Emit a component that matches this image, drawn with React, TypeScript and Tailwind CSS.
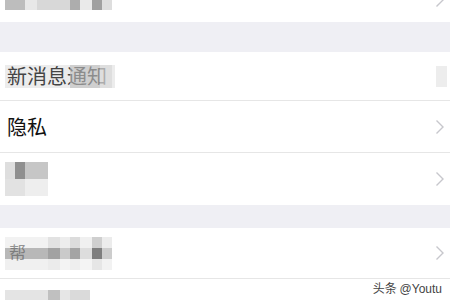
const font = "font-['Noto_Sans_CJK_SC','Noto_Sans',sans-serif]";

function Chevron() {
  return (
    <svg width="10" height="16" viewBox="0 0 10 16" className="shrink-0">
      <polyline points="1.5,1.5 8,8 1.5,14.5" fill="none" stroke="#c7c7cc" strokeWidth="1.4" />
    </svg>
  );
}

// one line of mosaic cells, class strings written out in full
function MosaicRow({ cells, h }: { cells: string[]; h: string }) {
  return (
    <div className={`flex ${h}`}>
      {cells.map((c, i) => (
        <div key={i} className={c} />
      ))}
    </div>
  );
}

export default function App() {
  return (
    <div className={`relative h-[300px] w-[450px] overflow-hidden bg-white ${font}`}>
      {/* top row, cut off */}
      <div className="flex h-[22px] items-start justify-between pl-[5px] pr-[5px]">
        <MosaicRow
          h="h-[10px]"
          cells={[
            "w-[20px] bg-[#bdbdbd]",
            "w-[12px] bg-[#e8e8e8]",
            "w-[33px] bg-[#d8d8d8]",
            "w-[10px] bg-[#adadad]",
            "w-[12px] bg-[#eaeaea]",
            "w-[10px] bg-[#a0a0a0]",
            "w-[10px] bg-[#dedede]",
          ]}
        />
        <div className="-mt-[8px]">
          <Chevron />
        </div>
      </div>

      <div className="h-[30px] bg-[#efeff4]" />

      {/* 新消息通知 */}
      <div className="flex h-[48px] items-center justify-between pl-[5px] pr-[3px]">
        <div className="relative flex h-[23px] items-center bg-[#ececec] pl-[2px] pr-[8px]">
          <span className="text-[20px] leading-none text-[#444]">新消息通知</span>
          <div className="absolute left-[65px] top-0 h-[23px] w-[30px] bg-[#bdbdbd]/60" />
          <div className="absolute left-[95px] top-0 h-[23px] w-[12px] bg-[#d8d8d8]/70" />
        </div>
        <div className="h-[21px] w-[11px] bg-[#ededed]" />
      </div>
      <div className="h-px bg-[#e6e6e6]" />

      {/* 隐私 */}
      <div className="flex h-[51px] items-center justify-between pl-[7px] pr-[5px]">
        <span className="text-[20px] leading-none text-[#111]">隐私</span>
        <Chevron />
      </div>
      <div className="h-px bg-[#e6e6e6]" />

      {/* 通用 (mosaic) */}
      <div className="flex h-[52px] items-center justify-between pl-[5px] pr-[5px]">
        <div className="flex flex-col">
          <MosaicRow h="h-[17px]" cells={["w-[10px] bg-[#dedede]", "w-[10px] bg-[#8f8f8f]", "w-[23px] bg-[#c6c6c6]"]} />
          <MosaicRow h="h-[17px]" cells={["w-[20px] bg-[#e2e2e2]", "w-[23px] bg-[#eeeeee]"]} />
        </div>
        <Chevron />
      </div>

      <div className="h-[23px] bg-[#efeff4]" />

      {/* 帮助与反馈 (mosaic) */}
      <div className="flex h-[50px] items-center justify-between pl-[5px] pr-[5px]">
        <div className="relative flex flex-col">
          <MosaicRow
            h="h-[11px]"
            cells={[
              "w-[43px] bg-[#f2f2f2]",
              "w-[12px] bg-[#e2e2e2]",
              "w-[10px] bg-[#ededed]",
              "w-[10px] bg-[#dcdcdc]",
              "w-[12px] bg-[#f0f0f0]",
              "w-[10px] bg-[#cfcfcf]",
              "w-[10px] bg-[#ececec]",
            ]}
          />
          <MosaicRow
            h="h-[11px]"
            cells={[
              "w-[43px] bg-[#b8b8b8]",
              "w-[12px] bg-[#a2a2a2]",
              "w-[10px] bg-[#cacaca]",
              "w-[10px] bg-[#a4a4a4]",
              "w-[12px] bg-[#dddddd]",
              "w-[10px] bg-[#7e7e7e]",
              "w-[10px] bg-[#cdcdcd]",
            ]}
          />
          <MosaicRow
            h="h-[11px]"
            cells={[
              "w-[43px] bg-[#f0f0f0]",
              "w-[12px] bg-[#ebebeb]",
              "w-[10px] bg-[#f3f3f3]",
              "w-[10px] bg-[#eeeeee]",
              "w-[12px] bg-[#f4f4f4]",
              "w-[10px] bg-[#e6e6e6]",
              "w-[10px] bg-[#f2f2f2]",
            ]}
          />
          <span className="absolute left-[4px] top-[6px] text-[17px] leading-none text-[#555]/60">帮</span>
        </div>
        <Chevron />
      </div>
      <div className="h-px bg-[#e6e6e6]" />

      {/* last row, cut off */}
      <div className="flex pl-[5px] pt-[11px]">
        <MosaicRow
          h="h-[10px]"
          cells={[
            "w-[43px] bg-[#e4e4e4]",
            "w-[12px] bg-[#c0c0c0]",
            "w-[10px] bg-[#e6e6e6]",
            "w-[20px] bg-[#dadada]",
          ]}
        />
      </div>

      {/* watermark */}
      <div className="absolute right-[8px] top-[280px] text-[12px] leading-[16px] text-[#444]">
        头条 <span className="font-['Liberation_Sans',sans-serif]">@Youtu</span>
      </div>
    </div>
  );
}
